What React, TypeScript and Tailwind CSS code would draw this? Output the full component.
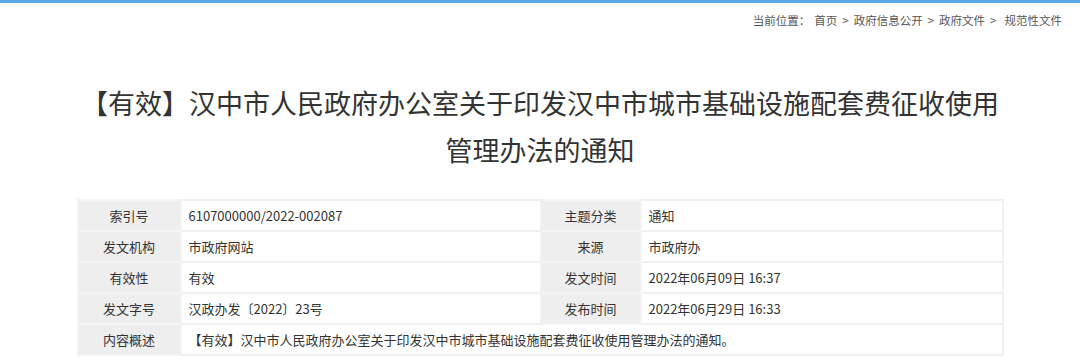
import React from "react";

const rows: [string, string, string, string][] = [
  ["索引号", "6107000000/2022-002087", "主题分类", "通知"],
  ["发文机构", "市政府网站", "来源", "市政府办"],
  ["有效性", "有效", "发文时间", "2022年06月09日 16:37"],
  ["发文字号", "汉政办发〔2022〕23号", "发布时间", "2022年06月29日 16:33"],
];

const font = { fontFamily: '"Noto Sans CJK SC", "Noto Sans", sans-serif' };

export default function App() {
  const label = "bg-[#eeeeee] border-2 border-[#f4f4f4] text-center text-[#333] h-[31px] p-0";
  const value = "bg-white border-2 border-[#f0f0f0] text-left text-[#333] h-[31px] pl-[7px] p-0";
  return (
    <div className="w-[1080px] h-[361px] bg-white overflow-hidden" style={font}>
      <div className="h-[3px] bg-[#5aaaea]" />
      <div className="flex justify-end pr-[18px] pt-[10px] text-[11.5px] leading-[14px] text-[#555]">
        <span>当前位置：</span>
        <span className="ml-[4px]">首页</span>
        <span className="mx-[5px]">&gt;</span>
        <span>政府信息公开</span>
        <span className="mx-[5px]">&gt;</span>
        <span>政府文件</span>
        <span className="ml-[5px] mr-[8px]">&gt;</span>
        <span>规范性文件</span>
      </div>
      <h1 className="mx-auto mt-[52px] w-[960px] text-center text-[27px] leading-[47px] font-normal text-[#333] whitespace-nowrap">
        【有效】汉中市人民政府办公室关于印发汉中市城市基础设施配套费征收使用
        <br />
        管理办法的通知
      </h1>
      <table className="mx-auto mt-[26px] w-[927px] border-collapse table-fixed text-[13px]">
        <colgroup>
          <col className="w-[103px]" />
          <col className="w-[360px]" />
          <col className="w-[100px]" />
          <col />
        </colgroup>
        <tbody>
          {rows.map((r) => (
            <tr key={r[0]}>
              <td className={label}>{r[0]}</td>
              <td className={value}>{r[1]}</td>
              <td className={label}>{r[2]}</td>
              <td className={value}>{r[3]}</td>
            </tr>
          ))}
          <tr>
            <td className={label}>内容概述</td>
            <td className={value} colSpan={3}>
              【有效】汉中市人民政府办公室关于印发汉中市城市基础设施配套费征收使用管理办法的通知。
            </td>
          </tr>
        </tbody>
      </table>
    </div>
  );
}
